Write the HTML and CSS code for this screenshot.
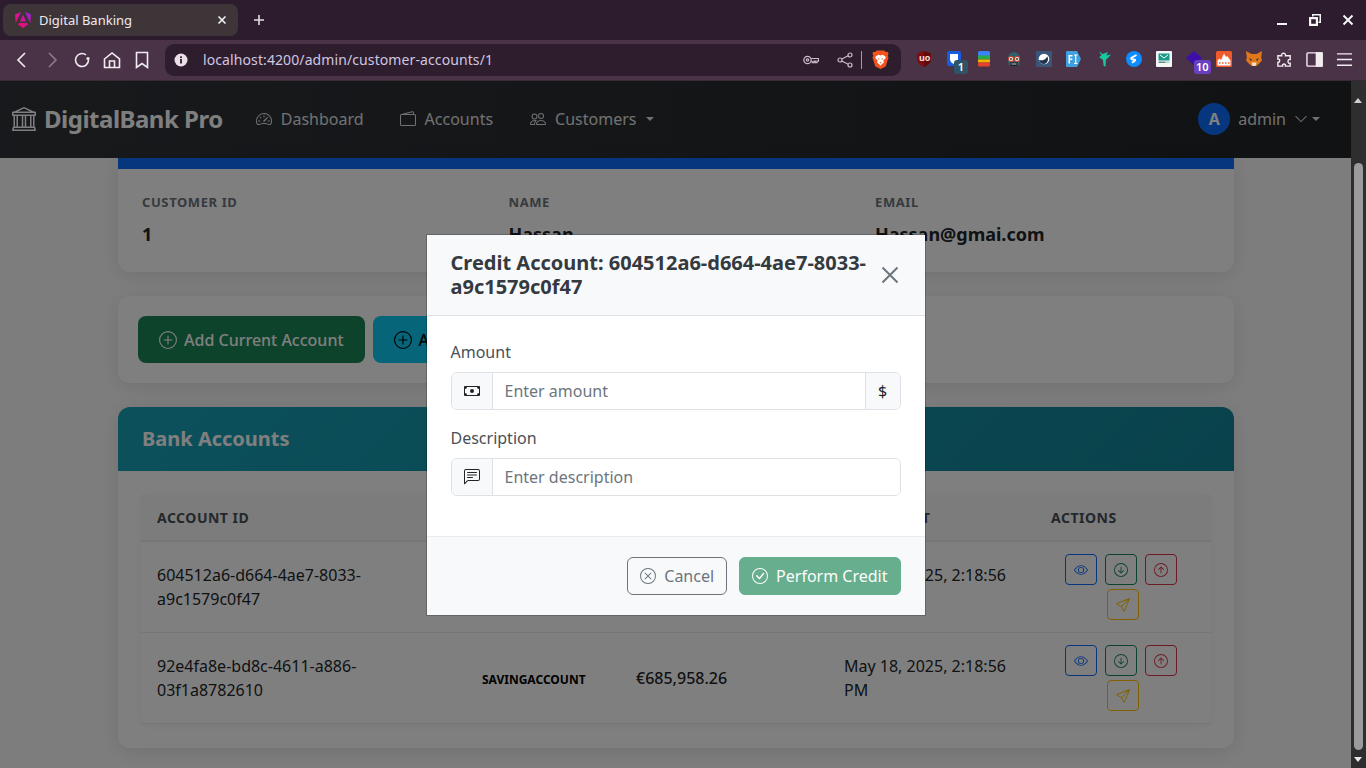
FILE: index.html
```html
<!DOCTYPE html>
<html lang="en">
<head>
  <meta charset="UTF-8">
  <meta name="viewport" content="width=device-width, initial-scale=1.0">
  <title>Digital Banking</title>
  <link rel="stylesheet" href="styles.css">
</head>
<body>

  <!-- Icon sprite -->
  <svg class="sprite" xmlns="http://www.w3.org/2000/svg">
    <symbol id="i-bank" viewBox="0 0 16 16"><path d="m8 0 6.61 3h.89a.5.5 0 0 1 .5.5v2a.5.5 0 0 1-.5.5H15v7a.5.5 0 0 1 .485.38l.5 2a.498.498 0 0 1-.485.62H.5a.498.498 0 0 1-.485-.62l.5-2A.501.501 0 0 1 1 13V6H.5a.5.5 0 0 1-.5-.5v-2A.5.5 0 0 1 .5 3h.89L8 0ZM3.777 3h8.447L8 1 3.777 3ZM2 6v7h1V6H2Zm2 0v7h2.5V6H4Zm3.5 0v7h1V6h-1Zm2 0v7H12V6H9.5ZM13 6v7h1V6h-1Zm2-1V4H1v1h14Zm-.39 9H1.39l-.25 1h13.72l-.25-1Z"/></symbol>
    <symbol id="i-speed" viewBox="0 0 16 16"><path d="M8 4a.5.5 0 0 1 .5.5V6a.5.5 0 0 1-1 0V4.5A.5.5 0 0 1 8 4zM3.732 5.732a.5.5 0 0 1 .707 0l.915.914a.5.5 0 1 1-.708.708l-.914-.915a.5.5 0 0 1 0-.707zM2 10a.5.5 0 0 1 .5-.5h1.586a.5.5 0 0 1 0 1H2.5A.5.5 0 0 1 2 10zm9.5 0a.5.5 0 0 1 .5-.5h1.5a.5.5 0 0 1 0 1H12a.5.5 0 0 1-.5-.5zm.754-4.246a.389.389 0 0 0-.527-.02L7.547 9.31a.91.91 0 1 0 1.302 1.258l3.434-4.297a.389.389 0 0 0-.029-.518z"/><path d="M0 10a8 8 0 1 1 15.547 2.661c-.442 1.253-1.845 1.602-2.932 1.25C11.309 13.488 9.475 13 8 13c-1.474 0-3.31.488-4.615.911-1.087.352-2.49.003-2.932-1.25A7.988 7.988 0 0 1 0 10zm8-7a7 7 0 0 0-6.603 9.329c.203.575.923.876 1.68.63C4.397 12.533 6.358 12 8 12s3.604.532 4.923.96c.757.245 1.477-.056 1.68-.631A7 7 0 0 0 8 3z"/></symbol>
    <symbol id="i-wallet" viewBox="0 0 16 16"><path d="M12.136.326A1.5 1.5 0 0 1 14 1.78V3h.5A1.5 1.5 0 0 1 16 4.5v9a1.5 1.5 0 0 1-1.5 1.5h-13A1.5 1.5 0 0 1 0 13.5v-9a1.5 1.5 0 0 1 1.432-1.499L12.136.326zM5.562 3H13V1.78a.5.5 0 0 0-.621-.484L5.562 3zM1.5 4a.5.5 0 0 0-.5.5v9a.5.5 0 0 0 .5.5h13a.5.5 0 0 0 .5-.5v-9a.5.5 0 0 0-.5-.5h-13z"/></symbol>
    <symbol id="i-people" viewBox="0 0 16 16"><path d="M15 14s1 0 1-1-1-4-5-4-5 3-5 4 1 1 1 1h8Zm-7.978-1A.261.261 0 0 1 7 12.996c.001-.264.167-1.03.76-1.72C8.312 10.629 9.282 10 11 10c1.717 0 2.687.63 3.24 1.276.593.69.758 1.457.76 1.72l-.008.002a.274.274 0 0 1-.014.002H7.022ZM11 7a2 2 0 1 0 0-4 2 2 0 0 0 0 4Zm3-2a3 3 0 1 1-6 0 3 3 0 0 1 6 0ZM6.936 9.28a5.88 5.88 0 0 0-1.23-.247A7.35 7.35 0 0 0 5 9c-4 0-5 3-5 4 0 .667.333 1 1 1h4.216A2.238 2.238 0 0 1 5 13c0-1.01.377-2.042 1.09-2.904.243-.294.526-.569.846-.816ZM4.92 10A5.493 5.493 0 0 0 4 13H1c0-.26.164-1.03.76-1.724.545-.636 1.492-1.256 3.16-1.275ZM1.5 5.5a3 3 0 1 1 6 0 3 3 0 0 1-6 0Zm3-2a2 2 0 1 0 0 4 2 2 0 0 0 0-4Z"/></symbol>
    <symbol id="i-chevron" viewBox="0 0 16 16"><path d="M1.646 4.646a.5.5 0 0 1 .708 0L8 10.293l5.646-5.647a.5.5 0 0 1 .708.708l-6 6a.5.5 0 0 1-.708 0l-6-6a.5.5 0 0 1 0-.708z"/></symbol>
    <symbol id="i-plus" viewBox="0 0 16 16"><path d="M8 15A7 7 0 1 1 8 1a7 7 0 0 1 0 14zm0 1A8 8 0 1 0 8 0a8 8 0 0 0 0 16z"/><path d="M8 4a.5.5 0 0 1 .5.5v3h3a.5.5 0 0 1 0 1h-3v3a.5.5 0 0 1-1 0v-3h-3a.5.5 0 0 1 0-1h3v-3A.5.5 0 0 1 8 4z"/></symbol>
    <symbol id="i-xcircle" viewBox="0 0 16 16"><path d="M8 15A7 7 0 1 1 8 1a7 7 0 0 1 0 14zm0 1A8 8 0 1 0 8 0a8 8 0 0 0 0 16z"/><path d="M4.646 4.646a.5.5 0 0 1 .708 0L8 7.293l2.646-2.647a.5.5 0 0 1 .708.708L8.707 8l2.647 2.646a.5.5 0 0 1-.708.708L8 8.707l-2.646 2.647a.5.5 0 0 1-.708-.708L7.293 8 4.646 5.354a.5.5 0 0 1 0-.708z"/></symbol>
    <symbol id="i-check" viewBox="0 0 16 16"><path d="M8 15A7 7 0 1 1 8 1a7 7 0 0 1 0 14zm0 1A8 8 0 1 0 8 0a8 8 0 0 0 0 16z"/><path d="M10.97 4.97a.235.235 0 0 0-.02.022L7.477 9.417 5.384 7.323a.75.75 0 0 0-1.06 1.06L6.97 11.03a.75.75 0 0 0 1.079-.02l3.992-4.99a.75.75 0 0 0-1.071-1.05z"/></symbol>
    <symbol id="i-eye" viewBox="0 0 16 16"><path d="M16 8s-3-5.5-8-5.5S0 8 0 8s3 5.5 8 5.5S16 8 16 8zM1.173 8a13.133 13.133 0 0 1 1.66-2.043C4.12 4.668 5.88 3.5 8 3.5c2.12 0 3.879 1.168 5.168 2.457A13.133 13.133 0 0 1 14.828 8c-.058.087-.122.183-.195.288-.335.48-.83 1.12-1.465 1.755C11.879 11.332 10.119 12.5 8 12.5c-2.12 0-3.879-1.168-5.168-2.457A13.134 13.134 0 0 1 1.172 8z"/><path d="M8 5.5a2.5 2.5 0 1 0 0 5 2.5 2.5 0 0 0 0-5zM4.5 8a3.5 3.5 0 1 1 7 0 3.5 3.5 0 0 1-7 0z"/></symbol>
    <symbol id="i-down" viewBox="0 0 16 16"><path d="M1 8a7 7 0 1 0 14 0A7 7 0 0 0 1 8zm15 0A8 8 0 1 1 0 8a8 8 0 0 1 16 0zM8.5 4.5a.5.5 0 0 0-1 0v5.793L5.354 8.146a.5.5 0 1 0-.708.708l3 3a.5.5 0 0 0 .708 0l3-3a.5.5 0 0 0-.708-.708L8.5 10.293V4.5z"/></symbol>
    <symbol id="i-up" viewBox="0 0 16 16"><path d="M1 8a7 7 0 1 0 14 0A7 7 0 0 0 1 8zm15 0A8 8 0 1 1 0 8a8 8 0 0 1 16 0zm-7.5 3.5a.5.5 0 0 1-1 0V5.707L5.354 7.854a.5.5 0 1 1-.708-.708l3-3a.5.5 0 0 1 .708 0l3 3a.5.5 0 0 1-.708.708L8.5 5.707V11.5z"/></symbol>
    <symbol id="i-send" viewBox="0 0 16 16"><path d="M15.854.146a.5.5 0 0 1 .11.54l-5.819 14.547a.75.75 0 0 1-1.329.124l-3.178-4.995L.643 7.184a.75.75 0 0 1 .124-1.33L15.314.037a.5.5 0 0 1 .54.11ZM6.636 10.07l2.761 4.338L14.13 2.576 6.636 10.07Zm6.787-8.201L1.591 6.602l4.339 2.76 7.494-7.493Z"/></symbol>
    <symbol id="i-cash" viewBox="0 0 16 16"><path d="M8 10a2 2 0 1 0 0-4 2 2 0 0 0 0 4z"/><path d="M0 4a1 1 0 0 1 1-1h14a1 1 0 0 1 1 1v8a1 1 0 0 1-1 1H1a1 1 0 0 1-1-1V4zm3 0a2 2 0 0 1-2 2v4a2 2 0 0 1 2 2h10a2 2 0 0 1 2-2V6a2 2 0 0 1-2-2H3z"/></symbol>
    <symbol id="i-chat" viewBox="0 0 16 16"><path d="M14 1a1 1 0 0 1 1 1v8a1 1 0 0 1-1 1H4.414A2 2 0 0 0 3 11.586l-2 2V2a1 1 0 0 1 1-1h12zM2 0a2 2 0 0 0-2 2v12.793a.5.5 0 0 0 .854.353l2.853-2.853A1 1 0 0 1 4.414 12H14a2 2 0 0 0 2-2V2a2 2 0 0 0-2-2H2z"/><path d="M3 3.5a.5.5 0 0 1 .5-.5h9a.5.5 0 0 1 0 1h-9a.5.5 0 0 1-.5-.5zM3 6a.5.5 0 0 1 .5-.5h9a.5.5 0 0 1 0 1h-9A.5.5 0 0 1 3 6zm0 2.5a.5.5 0 0 1 .5-.5h5a.5.5 0 0 1 0 1h-5a.5.5 0 0 1-.5-.5z"/></symbol>
  </svg>

  <!-- Browser tab strip -->
  <div class="tabstrip">
    <div class="tab">
      <svg class="favicon" viewBox="0 0 16 16">
        <defs><linearGradient id="ng" x1="0" y1="1" x2="1" y2="0"><stop offset="0" stop-color="#f0125f"/><stop offset="0.55" stop-color="#d6119c"/><stop offset="1" stop-color="#8a2be2"/></linearGradient></defs>
        <path d="M6 0 .7 11 0 2.500zM10 0l5.300 11 .7-8.500zM8 2.500l3 7H5zM4 11h8l1 1.500L8 16l-5-3.500z" fill="url(#ng)"/>
      </svg>
      <span class="tab-title">Digital Banking</span>
      <svg class="tab-close" viewBox="0 0 10 10"><path d="M1.500 1.500l7 7M8.500 1.500l-7 7"/></svg>
    </div>
    <svg class="tab-new" viewBox="0 0 12 12"><path d="M6 1v10M1 6h10"/></svg>
    <div class="win-controls">
      <svg viewBox="0 0 12 12"><rect x="1" y="9" width="10" height="2"/></svg>
      <svg viewBox="0 0 12 12"><path d="M3 0h9v9H9.500V7.500h1V1.500H4.500v1H3z"/><path d="M0 3h9v9H0zM2.200 5.200v4.600h4.600V5.200z" fill-rule="evenodd"/></svg>
      <svg viewBox="0 0 12 12"><path d="M1.500 1.500l9 9M10.500 1.500l-9 9" class="win-x"/></svg>
    </div>
  </div>

  <!-- Browser toolbar -->
  <div class="toolbar">
    <div class="nav-btns">
      <svg viewBox="0 0 20 20"><path d="M13 3 6 10l7 7"/></svg>
      <svg class="off" viewBox="0 0 20 20"><path d="M7 3l7 7-7 7"/></svg>
      <svg viewBox="0 0 20 20"><path d="M16.500 10A6.500 6.500 0 1 1 14 4.900"/><circle cx="16" cy="8.500" r="1.600" class="dot"/></svg>
      <svg viewBox="0 0 20 20"><path d="M2.500 9 10 3l7.500 6v8.500h-15zM7.500 17.500V11h5v6.500"/></svg>
      <svg viewBox="0 0 20 20"><path d="M4.500 2.500h11v15l-5.500-4-5.500 4z"/></svg>
    </div>
    <div class="urlbar">
      <svg class="url-info" viewBox="0 0 16 16"><circle cx="8" cy="8" r="6.500" fill="#eadfe8"/><rect x="7.100" y="7" width="1.800" height="4.500" fill="#2e1d2d"/><rect x="7.100" y="4.300" width="1.800" height="1.800" fill="#2e1d2d"/></svg>
      <span class="url-text">localhost:4200/admin/customer-accounts/1</span>
      <svg class="url-icon url-key" viewBox="0 0 16 16"><circle cx="4.500" cy="8" r="3.700"/><circle cx="4.500" cy="8" r="1.200"/><path d="M8.200 6.500h7.300v2.700h-1.500v1.500h-1.700V9.200h-1.300v1.500H9.300V9.500H8.200"/></svg>
      <svg class="url-icon url-share" viewBox="0 0 16 16"><circle cx="3" cy="8" r="2"/><circle cx="13" cy="3" r="2"/><circle cx="13" cy="13" r="2"/><path d="M4.800 7l6.400-3.200M4.800 9l6.400 3.200"/></svg>
      <span class="url-sep"></span>
      <svg class="brave" viewBox="0 0 18 20">
        <path d="M5 .5h8l1.500 1.500 2 -.3 1 1.800-.8 2.500.8 2-3 9.500L9 20l-5.500-2.500-3-9.500.8-2-.8-2.500 1-1.800 2 .3z" fill="#f1521e"/>
        <path d="M4 6.500 6.800 5 9 5.700 11.200 5 14 6.500l.5 1.800-2.700 3 .9 1.700L9 16.300 5.300 13l.9-1.700-2.700-3z" fill="#fff"/>
        <path d="M6 8.500l2 .8-.6 1.300zM12 8.500l-2 .8.600 1.300zM7.600 13h2.800L9 14.300z" fill="#f1521e"/>
      </svg>
    </div>
    <div class="extensions">
      <span class="ext"><svg viewBox="0 0 16 16"><path d="M8 0l7 2.500V8c0 3.500-3.500 6.500-7 8-3.500-1.500-7-4.500-7-8V2.500z" fill="#800c0c"/><path d="M8 0l7 2.500V8c0 3.500-3.500 6.500-7 8z" fill="#650a0a"/></svg><b class="ext-text">uo</b></span>
      <span class="ext"><svg viewBox="0 0 16 16"><rect x="1" y="0" width="14" height="15" rx="2" fill="#175ddc"/><path d="M4 3h8v5.500c0 2-2 3.500-4 4.500-2-1-4-2.500-4-4.500z" fill="#fff"/></svg><b class="badge badge-slate">1</b></span>
      <span class="ext"><svg viewBox="0 0 16 16"><rect x="2" y="0" width="12" height="5" rx="1.500" fill="#3b82f6"/><rect x="2" y="4.500" width="12" height="4" fill="#2aa84a"/><rect x="2" y="8.500" width="12" height="3" fill="#f5b400"/><rect x="2" y="11.500" width="12" height="4" rx="1.500" fill="#e5432d"/></svg></span>
      <span class="ext"><svg viewBox="0 0 16 16"><path d="M2 7a6 6 0 0 1 12 0v3l-1 5H3L2 10z" fill="#2f5f6b"/><rect x="4.500" y="11.500" width="7" height="3.500" fill="#1d1d1f"/><path d="M5.500 13h5" stroke="#cfcfcf"/><circle cx="5" cy="8" r="2.700" fill="#e8d6c8" stroke="#c0392b"/><circle cx="11" cy="8" r="2.700" fill="#e8d6c8" stroke="#c0392b"/><circle cx="5" cy="8" r=".9" fill="#3a2a2a"/><circle cx="11" cy="8" r=".9" fill="#3a2a2a"/></svg></span>
      <span class="ext"><svg viewBox="0 0 16 16"><rect x="0" y="0" width="16" height="16" rx="1" fill="#3a5578"/><circle cx="8" cy="8" r="5.300" fill="#fff"/><path d="M3 9c3 1 6 0 8.500-3.500 1.500 3.500-.5 7.500-3.500 7.500s-5-2-5-4z" fill="#1f3350"/></svg></span>
      <span class="ext"><svg viewBox="0 0 16 16"><path d="M1 0h10l4 8-4 8H1a1 1 0 0 1-1-1V1a1 1 0 0 1 1-1z" fill="#3fa0e0"/><path d="M2.500 4h4v1.500H4V7.500h2.300V9H4v3.500H2.500zM8 3.500h3.500v1H10.300v7.500h1.200v1H8v-1h1.200V4.500H8z" fill="#fff"/></svg></span>
      <span class="ext"><svg viewBox="0 0 16 16"><path d="M3 0l3.500 3L12 1 10.500 4.500 15 3.500 12 7l-2 1.500L9.500 16 7.500 14.500 7 9 3 6l2.500-1.500z" fill="#14c8a0"/></svg></span>
      <span class="ext"><svg viewBox="0 0 16 16"><circle cx="8" cy="8" r="8" fill="#0f8cff"/><path d="M10.500 4 6 6.500c-1.500 1-.5 2 1 2s3 0 1.500 1.500L6 11.800" fill="none" stroke="#fff" stroke-width="2"/></svg></span>
      <span class="ext"><svg viewBox="0 0 16 16"><rect x="0" y="0" width="16" height="16" rx="1" fill="#f3f6f5"/><rect x="2.500" y="2.500" width="11" height="7" fill="#1a9a88"/><path d="M4 4l4 3 4-3" fill="none" stroke="#fff"/><rect x="2.500" y="10.500" width="7" height="1.500" fill="#6a8a84"/><rect x="10" y="10.500" width="3.500" height="1.500" fill="#9fd8cc"/></svg></span>
      <span class="ext"><svg viewBox="0 0 16 16"><path d="M8 0l8 7-8 7-8-7z" fill="#3d0fa8"/></svg><b class="badge badge-purple">10</b></span>
      <span class="ext"><svg viewBox="0 0 16 16"><rect x="0" y="0" width="16" height="16" rx="1.500" fill="#ee5a2b"/><path d="M1.500 14.500v-5l2-2 1.500 1.500L8 2.500l2 3.500 1.200-1 3.300 4.500v5z" fill="#fff"/><path d="M3 12h1.500M6 12h1.500M9 12h1.500M12 12h1.500" stroke="#ee5a2b" stroke-width="1.500"/></svg></span>
      <span class="ext"><svg viewBox="0 0 16 16"><path d="M0 0l5.500 3h5L16 0l-.8 6.500.8 3-2.800 3-2.700 2.500h-5L2.800 12.500 0 9.500l.8-3z" fill="#e2761b"/><path d="M3 7l3 1.500L5 10zM13 7l-3 1.500 1 1.500z" fill="#233447"/><path d="M5.500 11.500h5L9.500 15h-3z" fill="#f3e0d0"/></svg></span>
      <span class="ext"><svg class="line" viewBox="0 0 18 18"><path d="M2 5h4c-1-3.500 5-3.500 4 0h5v4c-3-1-3 5 0 4v3h-5c1-3-4-3-3 0H2v-4c2.500 0 2.500-4 0-3.500z"/></svg></span>
      <span class="ext"><svg class="line" viewBox="0 0 18 18"><rect x="1" y="2" width="16" height="14" rx="1"/><rect x="11" y="2" width="6" height="14" class="fill"/></svg></span>
      <span class="ext"><svg class="line" viewBox="0 0 18 18"><path d="M1 3h16M1 9h16M1 15h16"/></svg></span>
    </div>
  </div>

  <div class="window">
    <div class="viewport">

      <nav class="navbar">
        <a class="brand"><svg class="brand-icon"><use href="#i-bank"/></svg>DigitalBank Pro</a>
        <div class="nav-links">
          <a class="nav-link"><svg><use href="#i-speed"/></svg>Dashboard</a>
          <a class="nav-link"><svg><use href="#i-wallet"/></svg>Accounts</a>
          <a class="nav-link nav-last"><svg><use href="#i-people"/></svg>Customers<span class="caret caret-l"></span></a>
        </div>
        <div class="user">
          <span class="avatar">A</span>
          <span class="user-name">admin</span>
          <svg class="user-chevron"><use href="#i-chevron"/></svg>
          <span class="caret"></span>
        </div>
      </nav>

      <div class="container">
        <section class="card customer-card">
          <div class="customer-strip"></div>
          <div class="customer-grid">
            <div><div class="info-label">Customer ID</div><div class="info-value">1</div></div>
            <div><div class="info-label">Name</div><div class="info-value">Hassan</div></div>
            <div><div class="info-label">Email</div><div class="info-value">Hassan@gmai.com</div></div>
          </div>
        </section>

        <section class="card actions-card">
          <button class="btn-add btn-green"><svg><use href="#i-plus"/></svg>Add Current Account</button>
          <button class="btn-add btn-cyan"><svg><use href="#i-plus"/></svg>Add Saving Account</button>
        </section>

        <section class="card accounts-card">
          <h2 class="accounts-head">Bank Accounts</h2>
          <div class="accounts-body">
            <table class="accounts">
              <colgroup><col class="c-id"><col class="c-type"><col class="c-bal"><col class="c-date"><col class="c-act"></colgroup>
              <thead>
                <tr><th>Account ID</th><th>Type</th><th>Balance</th><th>Created At</th><th>Actions</th></tr>
              </thead>
              <tbody>
                <tr>
                  <td>604512a6-d664-4ae7-8033-a9c1579c0f47</td>
                  <td><span class="acc-type">CURRENTACCOUNT</span></td>
                  <td class="balance">€412,730.14</td>
                  <td>May 18, 2025, 2:18:56 PM</td>
                  <td class="act-cell">
                    <button class="act act-blue"><svg><use href="#i-eye"/></svg></button>
                    <button class="act act-green"><svg><use href="#i-down"/></svg></button>
                    <button class="act act-red"><svg><use href="#i-up"/></svg></button>
                    <button class="act act-amber act-last"><svg><use href="#i-send"/></svg></button>
                  </td>
                </tr>
                <tr>
                  <td>92e4fa8e-bd8c-4611-a886-03f1a8782610</td>
                  <td><span class="acc-type">SAVINGACCOUNT</span></td>
                  <td class="balance">€685,958.26</td>
                  <td>May 18, 2025, 2:18:56 PM</td>
                  <td class="act-cell">
                    <button class="act act-blue"><svg><use href="#i-eye"/></svg></button>
                    <button class="act act-green"><svg><use href="#i-down"/></svg></button>
                    <button class="act act-red"><svg><use href="#i-up"/></svg></button>
                    <button class="act act-amber act-last"><svg><use href="#i-send"/></svg></button>
                  </td>
                </tr>
              </tbody>
            </table>
          </div>
        </section>
      </div>

      <!-- Credit modal -->
      <div class="backdrop">
        <div class="modal">
          <div class="modal-head">
            <h3 class="modal-title">Credit Account: 604512a6-d664-4ae7-8033-a9c1579c0f47</h3>
            <svg class="modal-close" viewBox="0 0 18 18"><path d="M1.500 1.500l15 15M16.500 1.500l-15 15"/></svg>
          </div>
          <div class="modal-body">
            <label class="field-label">Amount</label>
            <div class="input-group">
              <span class="addon"><svg><use href="#i-cash"/></svg></span>
              <input class="field" type="text" placeholder="Enter amount">
              <span class="addon addon-end">$</span>
            </div>
            <label class="field-label">Description</label>
            <div class="input-group">
              <span class="addon"><svg><use href="#i-chat"/></svg></span>
              <input class="field" type="text" placeholder="Enter description">
            </div>
          </div>
          <div class="modal-foot">
            <button class="btn-cancel"><svg><use href="#i-xcircle"/></svg>Cancel</button>
            <button class="btn-perform"><svg><use href="#i-check"/></svg>Perform Credit</button>
          </div>
        </div>
      </div>
    </div>

    <div class="scrollbar">
      <span class="sb-up"></span>
      <span class="sb-thumb"></span>
      <span class="sb-down"></span>
    </div>
  </div>

</body>
</html>
```

FILE: styles.css
```css
/* Reset and base */
* { margin: 0; padding: 0; box-sizing: border-box; }
html, body { width: 100%; height: 100%; overflow: hidden; }
body { display: flex; flex-direction: column; font-family: "Noto Sans", sans-serif; font-size: 16px; line-height: 24px; color: #212529; background: #2d1c2d; }
.sprite { display: none; }
button { font-family: inherit; }

/* Browser tab strip */
.tabstrip { display: flex; align-items: center; height: 40px; background: #2d1c2d; flex-shrink: 0; }
.tab { display: flex; align-items: center; width: 235px; height: 32px; margin-left: 3px; padding: 0 11px 0 12px; background: #3e3539; border-radius: 8px; color: #f0e9ee; font-size: 13px; }
.favicon { width: 16px; height: 16px; flex-shrink: 0; }
.tab-title { margin-left: 8px; flex: 1; }
.tab-close { width: 10px; height: 10px; fill: none; stroke: #f2f2f2; stroke-width: 1.6; }
.tab-new { width: 12px; height: 12px; margin-left: 15px; fill: none; stroke: #e4dde2; stroke-width: 1.6; }
.win-controls { display: flex; gap: 21px; margin-left: auto; margin-right: 12px; }
.win-controls svg { width: 12px; height: 12px; fill: #f4f4f4; }
.win-x { stroke: #f4f4f4; stroke-width: 2; fill: none; }

/* Browser toolbar */
.toolbar { display: flex; align-items: center; height: 41px; padding: 0 0 1px 12px; background: #4a3347; border-bottom: 1px solid #3a2a38; flex-shrink: 0; }
.nav-btns { display: flex; gap: 10px; width: 153px; }
.nav-btns svg { width: 20px; height: 20px; fill: none; stroke: #f2ecf0; stroke-width: 1.6; }
.nav-btns svg.off { stroke: #8d7a8a; }
.nav-btns .dot { fill: #f2ecf0; stroke: none; }
.urlbar { display: flex; align-items: center; width: 736px; height: 32px; padding: 0 12px 0 8px; background: #2e1d2d; border-radius: 9px; }
.url-info { width: 16px; height: 16px; }
.url-text { margin-left: 14px; flex: 1; font-size: 14px; letter-spacing: 0.1px; color: #cfc6e0; }
.url-icon { width: 16px; height: 16px; fill: none; stroke: #c8bcc6; stroke-width: 1.2; }
.url-key { margin-right: 18px; }
.url-share { margin-right: 8px; }
.url-sep { width: 1px; height: 18px; background: #a89aa6; }
.brave { width: 17px; height: 19px; margin-left: 10px; }
.extensions { display: flex; margin-left: 8px; }
.ext { position: relative; display: flex; align-items: center; justify-content: center; width: 30px; height: 30px; }
.ext svg { width: 16px; height: 16px; margin-bottom: 1px; }
.ext .line { width: 17px; height: 17px; fill: none; stroke: #f2ecf0; stroke-width: 1.5; }
.ext .line .fill { fill: #f2ecf0; }
.ext-text { position: absolute; top: 6px; left: 10px; font-size: 9px; line-height: 14px; color: #f2dcdc; }
.badge { position: absolute; top: 15px; left: 15px; min-width: 14px; height: 14px; padding: 0 2px; border-radius: 3px; font-size: 11px; line-height: 14px; text-align: center; color: #fff; font-weight: 600; }
.badge-slate { background: #2f5468; }
.badge-purple { background: #6a3fc0; }

/* Page window */
.window { flex: 1; display: flex; min-height: 0; }
.viewport { position: relative; flex: 1; min-width: 0; overflow: hidden; background: #fbfbfb; }

/* Navbar */
.navbar { display: flex; align-items: center; height: 77px; padding: 0 31px 1px 12px; background: linear-gradient(90deg, #2f3338, #212428); color: #e2e2e2; }
.brand { display: flex; align-items: center; gap: 8px; font-size: 24px; font-weight: 700; letter-spacing: -0.5px; color: #fff; }
.brand-icon { width: 24px; height: 24px; fill: #fff; }
.nav-links { display: flex; gap: 36px; margin-left: 33px; }
.nav-link { display: flex; align-items: center; gap: 9px; color: #e2e2e2; }
.nav-last { margin-left: 1px; }
.nav-link svg { width: 16px; height: 16px; fill: #e2e2e2; }
.caret { display: inline-block; width: 0; height: 0; border-top: 4.8px solid currentColor; border-left: 4.8px solid transparent; border-right: 4.8px solid transparent; }
.caret-l { margin-left: 1px; }
.user { display: flex; align-items: center; margin-left: auto; }
.avatar { display: flex; align-items: center; justify-content: center; width: 32px; height: 32px; border-radius: 50%; background: #0d6efd; color: #fff; font-weight: 700; }
.user-name { margin-left: 8px; }
.user-chevron { width: 14px; height: 14px; margin-left: 8px; fill: #e2e2e2; }
.user .caret { margin-left: 4px; }

/* Content */
.container { width: 1116px; margin: 0 117px 0 118px; }
.card { background: #fff; border-radius: 12px; box-shadow: 0 4px 20px rgba(0,0,0,0.1); }
.customer-card { overflow: hidden; border-radius: 0 0 12px 12px; }
.customer-strip { height: 11px; background: #0d6efd; }
.customer-grid { display: grid; grid-template-columns: repeat(3, 366.5px); padding: 24px 0 0 24px; height: 103px; }
.info-label { font-size: 13px; line-height: 18px; font-weight: 700; letter-spacing: 0.6px; text-transform: uppercase; color: #6c757d; }
.info-value { margin-top: 10px; font-size: 18px; line-height: 27px; font-weight: 700; color: #212529; }

.actions-card { display: flex; gap: 8px; margin-top: 24px; padding: 20px; overflow: hidden; }
.btn-add { display: flex; align-items: center; gap: 7px; height: 47px; padding: 0 21px; border: none; border-radius: 8px; font-size: 16px; font-weight: 500; white-space: nowrap; flex-shrink: 0; }
.btn-add svg { width: 18px; height: 18px; fill: currentColor; }
.btn-green { background: #198754; color: #fff; }
.btn-cyan { background: #0dcaf0; color: #000; }

.accounts-card { margin-top: 24px; overflow: hidden; }
.accounts-head { height: 64px; padding: 0 24px; background: linear-gradient(135deg, #17a2b8, #138496); color: #fff; font-size: 20px; line-height: 64px; font-weight: 700; }
.accounts-body { padding: 23px 23px 24px; }
.accounts { width: 100%; table-layout: fixed; border-collapse: separate; border-spacing: 0; border-radius: 8px; box-shadow: 0 2px 10px rgba(0,0,0,0.05); }
.c-id { width: 325px; }
.c-type { width: 154px; }
.c-bal { width: 208px; }
.c-date { width: 207px; }
.accounts th { height: 48px; padding: 2px 16px 0; background: #f8f9fa; border-bottom: 2px solid #e9ecef; text-align: left; font-size: 14px; font-weight: 700; letter-spacing: 0.5px; text-transform: uppercase; color: #495057; }
.accounts td { padding: 12px 16px 8px; border-bottom: 1px solid #e9ecef; vertical-align: middle; color: #212529; }
.accounts td:nth-child(-n+4) { padding: 0 16px; }
.acc-type { font-size: 12px; font-weight: 700; color: #000; vertical-align: -1px; }
.balance { font-weight: 500; }
.act-cell { text-align: center; line-height: 0; }
.act { display: inline-flex; align-items: center; justify-content: center; width: 32px; height: 31px; margin: 0 4px 4px 0; background: transparent; border: 1px solid; border-radius: 4px; vertical-align: top; }
.act svg { width: 14px; height: 14px; fill: currentColor; }
.act-last { margin-right: 0; }
.act-blue { color: #0d6efd; }
.act-green { color: #198754; }
.act-red { color: #dc3545; }
.act-amber { color: #ffc107; }

/* Modal */
.backdrop { position: absolute; inset: 0; display: flex; align-items: center; justify-content: center; background: rgba(0,0,0,0.5); }
.modal { width: 498px; background: #fff; box-shadow: 0 0 0 1px rgba(0,0,0,0.2); }
.modal-head { display: flex; align-items: center; justify-content: space-between; height: 81px; padding: 0 24px; background: #f8f9fa; border-bottom: 1px solid #dee2e6; }
.modal-title { width: 420px; font-size: 20px; line-height: 24px; font-weight: 700; color: #343a40; }
.modal-close { width: 18px; height: 18px; margin: 0 2px 0 0; fill: none; stroke: #6c757d; stroke-width: 2; }
.modal-body { height: 220px; padding: 24px 24px 0; }
.field-label { display: block; margin-bottom: 8px; color: #495057; }
.input-group { display: flex; height: 38px; margin-bottom: 16px; border: 1px solid #dee2e6; border-radius: 6px; background: #fff; overflow: hidden; }
.addon { display: flex; align-items: center; justify-content: center; width: 41px; background: #f8f9fa; border-right: 1px solid #dee2e6; color: #212529; flex-shrink: 0; }
.addon svg { width: 16px; height: 16px; fill: #212529; }
.addon-end { width: 35px; border-right: none; border-left: 1px solid #dee2e6; }
.field { flex: 1; min-width: 0; padding: 0 12px; border: none; outline: none; font: inherit; color: #212529; }
.field::placeholder { color: #6c757d; opacity: 1; }
.modal-foot { display: flex; justify-content: flex-end; gap: 12px; height: 79px; padding: 20px 24px; background: #f8f9fa; border-top: 1px solid #e9ecef; }
.btn-cancel, .btn-perform { display: flex; align-items: center; gap: 8px; height: 38px; padding: 0 12px; border-radius: 6px; font-size: 16px; }
.btn-cancel svg, .btn-perform svg { width: 16px; height: 16px; fill: currentColor; }
.btn-cancel { background: transparent; border: 1px solid #6c757d; color: #6c757d; }
.btn-perform { background: #198754; border: 1px solid #198754; color: #fff; opacity: 0.65; }

/* Scrollbar */
.scrollbar { position: relative; width: 15px; background: #2e2e2e; flex-shrink: 0; }
.sb-up, .sb-down { position: absolute; left: 3px; width: 0; height: 0; border-left: 4.500px solid transparent; border-right: 4.500px solid transparent; }
.sb-up { top: 17px; border-bottom: 5px solid #cfcfcf; }
.sb-down { bottom: 6px; border-top: 5px solid #e8e8e8; }
.sb-thumb { position: absolute; top: 82px; left: 3px; width: 9px; height: 587px; border-radius: 5px; background: #9b9b9b; }
```
